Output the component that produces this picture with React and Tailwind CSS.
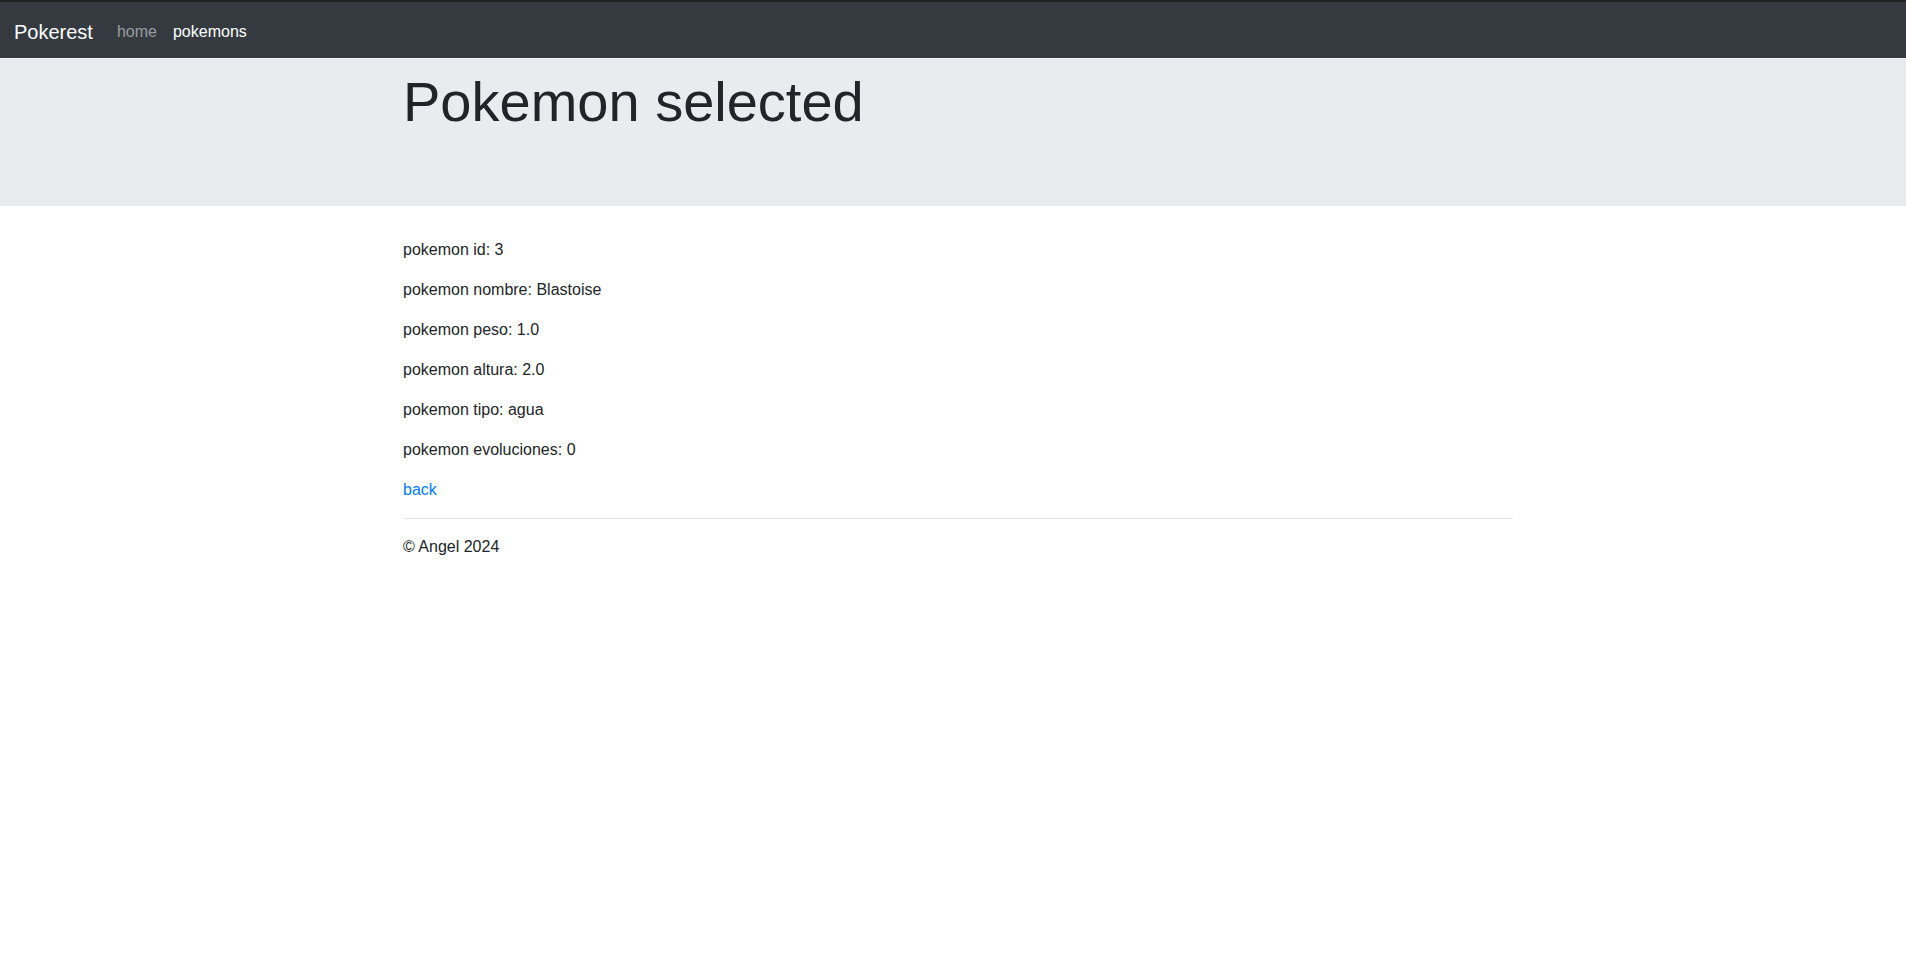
export default function App() {
  const font = { fontFamily: '"Liberation Sans", Arial, sans-serif' };
  const rows = [
    "pokemon id: 3",
    "pokemon nombre: Blastoise",
    "pokemon peso: 1.0",
    "pokemon altura: 2.0",
    "pokemon tipo: agua",
    "pokemon evoluciones: 0",
  ];
  return (
    <div className="min-h-screen bg-white text-[#212529]" style={font}>
      <nav className="h-[58px] border-t-2 border-[#222222] bg-[#343a40] flex items-center pl-[14px] pt-1">
        <a className="text-[20px] leading-[30px] text-white mr-4">Pokerest</a>
        <a className="text-[16px] leading-6 px-2 text-white/50">home</a>
        <a className="text-[16px] leading-6 px-2 text-white">pokemons</a>
      </nav>
      <div className="h-px bg-[#f4f5f7]" />
      <div className="bg-[#e9ecef] h-[147px] pt-[9px] pl-[10px]">
        <div className="mx-auto w-[1110px]">
          <h1 className="text-[56px] leading-[1.2] font-light">Pokemon selected</h1>
        </div>
      </div>
      <div className="pl-[10px] pt-8">
        <div className="mx-auto w-[1110px] text-[16px] leading-6">
          {rows.map((r) => (
            <p key={r} className="mb-4">{r}</p>
          ))}
          <p className="mb-4">
            <a className="text-[#007bff]">back</a>
          </p>
          <hr className="border-0 border-t border-[#e6e6e6] mb-4" />
          <footer>
            <p>© Angel 2024</p>
          </footer>
        </div>
      </div>
    </div>
  );
}
